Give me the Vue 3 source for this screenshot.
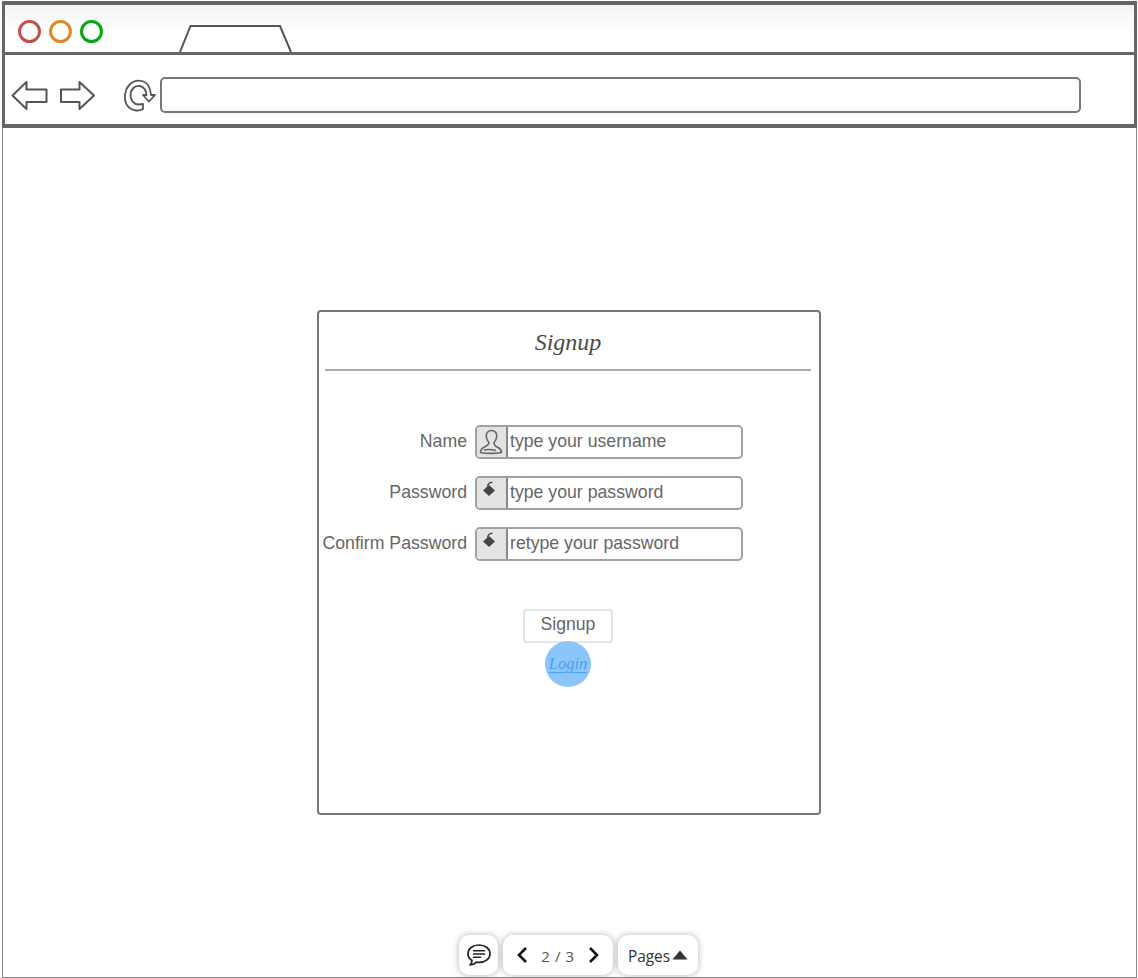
<script setup>
const fields = [
  { label: 'Name', placeholder: 'type your username', icon: 'user' },
  { label: 'Password', placeholder: 'type your password', icon: 'lock' },
  { label: 'Confirm Password', placeholder: 'retype your password', icon: 'lock' },
]
</script>

<template>
  <div class="page">
    <div class="window">
      <header class="chrome">
        <div class="tabbar">
          <span class="dot red"></span>
          <span class="dot orange"></span>
          <span class="dot green"></span>
          <svg class="tab" width="113" height="28" viewBox="0 0 113 28">
            <path d="M1 27 L11.500 1 L101 1 L112 27" fill="#fff" stroke="#555" stroke-width="2" />
          </svg>
        </div>
        <div class="toolbar">
          <svg class="nav-arrow" width="37" height="31" viewBox="0 0 37 31">
            <path d="M1.500 15.500 L15.500 2 V9.500 H35.500 V22 H15.500 V29 Z" fill="#fff" stroke="#555" stroke-width="2" stroke-linejoin="round" />
          </svg>
          <svg class="nav-arrow fwd" width="37" height="31" viewBox="0 0 37 31">
            <path d="M34 15.500 L19.500 2 V9.500 H1 V22 H19.500 V29 Z" fill="#fff" stroke="#555" stroke-width="2" stroke-linejoin="round" />
          </svg>
          <svg class="reload" width="34" height="35" viewBox="0 0 34 35">
            <path d="M20 31 C16 33.500 10 33 6 29.500 C1.500 25.500 0.500 18 3.500 11 C6.500 4.500 13 1.500 19 3 C25 4.500 27.500 10 28 17 H32 L26 23.500 L20 17 H23.500 C23 12 20.500 8.500 16.500 8 C11.500 7.500 7.500 11.500 7.500 17 C7.500 22.500 11 26.500 15.500 26.500 L20 26 Z" fill="#fff" stroke="#555" stroke-width="1.800" stroke-linejoin="round" />
          </svg>
          <div class="address"></div>
        </div>
      </header>

      <main class="content">
        <section class="card">
          <h1 class="title">Signup</h1>
          <hr class="rule" />
          <div class="form">
            <template v-for="f in fields" :key="f.label">
              <label class="label">{{ f.label }}</label>
              <div class="input">
                <span class="addon">
                  <svg v-if="f.icon === 'user'" class="user" width="24" height="26" viewBox="0 0 24 26">
                    <path d="M12.500 1.500 C9 1.500 7 4 7.300 7.500 C7.500 10 8.500 12 10 13.500 C10 15.500 8.500 16.500 5.500 18 C3 19.200 1.500 21 1.500 23.500 C7 24.500 16 24.500 22.500 23.500 C22.500 21 21 19.500 19 18.500 C16.500 17.500 15 15.500 15 13.500 C16.500 12 17.500 10 17.700 7.500 C18 4 16 1.500 12.500 1.500 Z" fill="none" stroke="#666" stroke-width="1.600" stroke-linejoin="round" />
                    <path d="M5 21 C9 20 13 20.500 17 21.500" fill="none" stroke="#666" stroke-width="1.400" />
                  </svg>
                  <svg v-else class="lock" width="18" height="20" viewBox="0 0 18 20">
                    <path d="M9 5 L15 10.500 L9 16 L3 10.500 Z" fill="#444" />
                    <path d="M7.500 6.500 C8 3.500 10 2 12.500 2.500" fill="none" stroke="#444" stroke-width="1.400" />
                  </svg>
                </span>
                <span class="placeholder">{{ f.placeholder }}</span>
              </div>
            </template>
          </div>
          <button class="submit" type="button">Signup</button>
          <a class="login">Login</a>
        </section>
      </main>

      <nav class="pager">
        <button class="pill comment" type="button" aria-label="Comments">
          <svg width="26" height="24" viewBox="0 0 26 24">
            <path d="M13 2 C6.500 2 2 5.800 2 10.700 C2 13.500 3.500 15.800 6 17.500 C6 19 5.500 20.800 4 22 C6.800 21.800 9 20.800 10.500 19.200 C11.300 19.300 12.100 19.400 13 19.400 C19.500 19.400 24 15.600 24 10.700 C24 5.800 19.500 2 13 2 Z" fill="none" stroke="#222" stroke-width="1.700" stroke-linejoin="round" />
            <path d="M7.500 7.800 H18.500 M7.500 11 H18.500 M7.500 14.200 H14.500" fill="none" stroke="#222" stroke-width="1.600" stroke-linecap="round" />
          </svg>
        </button>
        <div class="pill nav">
          <svg width="12" height="18" viewBox="0 0 12 18">
            <path d="M10 2 L3 9 L10 16" fill="none" stroke="#111" stroke-width="2.600" />
          </svg>
          <span class="count">2 / 3</span>
          <svg width="12" height="18" viewBox="0 0 12 18">
            <path d="M2 2 L9 9 L2 16" fill="none" stroke="#111" stroke-width="2.600" />
          </svg>
        </div>
        <button class="pill pages" type="button">
          <span class="pages-text">Pages</span>
          <svg width="16" height="10" viewBox="0 0 16 10">
            <path d="M8 0.500 L15.500 9.500 H0.500 Z" fill="#333" />
          </svg>
        </button>
      </nav>
    </div>
  </div>
</template>

<style>
html, body { margin: 0; background: #fff; }
</style>

<style scoped>
.page {
  width: 1138px;
  height: 978px;
  padding: 1px 1px 0 2px;
  box-sizing: border-box;
  background: #fff;
  font-family: "Liberation Sans", Arial, sans-serif;
}
.window {
  position: relative;
  height: 100%;
  box-sizing: border-box;
  border: 1px solid #888;
  border-width: 0 1px 1px 1px;
  display: flex;
  flex-direction: column;
}
.chrome {
  margin: 0 -1px;
  border: 3px solid #666;
  border-width: 4px 3px;
  height: 127px;
  box-sizing: border-box;
  flex: none;
  display: flex;
  flex-direction: column;
}
.tabbar {
  height: 50px;
  flex: none;
  box-sizing: border-box;
  border-bottom: 3px solid #666;
  background: linear-gradient(#f3f3f3, #fff 55%);
  display: flex;
  align-items: center;
  padding: 5px 0 0 13px;
  position: relative;
}
.dot {
  width: 23px;
  height: 23px;
  box-sizing: border-box;
  border-radius: 50%;
  border: 3px solid;
  margin-right: 8px;
  background: #fff;
}
.red { border-color: #c0504d; }
.orange { border-color: #e08a1e; }
.green { border-color: #00a816; }
.tab {
  position: absolute;
  left: 174px;
  bottom: -1px;
}
.toolbar {
  flex: 1;
  display: flex;
  align-items: center;
  padding: 11px 0 0 6px;
}
.nav-arrow { flex: none; }
.fwd { margin-left: 12px; }
.reload { margin-left: 26px; flex: none; }
.address {
  width: 921px;
  height: 36px;
  box-sizing: border-box;
  border: 2px solid #777;
  border-radius: 5px;
  margin-left: 3px;
  background: #fff;
}
.content {
  flex: 1;
  min-height: 0;
  padding-top: 182px;
  display: flex;
  justify-content: center;
}
.card {
  width: 504px;
  height: 505px;
  box-sizing: border-box;
  border: 2px solid #777;
  border-radius: 4px;
  display: flex;
  flex-direction: column;
  align-items: center;
  margin-left: -1px;
}
.title {
  margin: 0 2px 0 0;
  height: 57px;
  line-height: 60px;
  font-family: "Liberation Serif", serif;
  font-style: italic;
  font-weight: 400;
  font-size: 24px;
  color: #4a4a4a;
  flex: none;
}
.rule {
  align-self: stretch;
  margin: 0 8px 0 6px;
  border: 0;
  height: 2px;
  background: #aaa;
  flex: none;
}
.form {
  margin-top: 54px;
  align-self: flex-start;
  margin-left: 3px;
  display: grid;
  grid-template-columns: 145px 268px;
  column-gap: 8px;
  row-gap: 17px;
  align-items: center;
}
.label {
  text-align: right;
  font-size: 17.7px;
  color: #666;
  white-space: nowrap;
  padding-bottom: 1px;
}
.input {
  height: 34px;
  box-sizing: border-box;
  border: 2px solid #a0a0a0;
  border-radius: 5px;
  display: flex;
  align-items: center;
  overflow: hidden;
}
.addon {
  width: 31px;
  height: 100%;
  background: #e3e3e3;
  border-right: 2px solid #888;
  box-sizing: border-box;
  display: flex;
  align-items: center;
  justify-content: center;
  flex: none;
}
.user { margin-right: 2px; margin-top: -1px; }
.lock { margin-top: -7px; margin-right: 5px; }
.placeholder {
  margin-left: 2px;
  padding-bottom: 2px;
  font-size: 17.7px;
  color: #666;
  white-space: nowrap;
}
.submit {
  margin-top: 48px;
  margin-right: 2px;
  width: 90px;
  height: 34px;
  box-sizing: border-box;
  border: 2px solid #e4e4e4;
  border-radius: 4px;
  background: #fff;
  font-family: inherit;
  font-size: 17.6px;
  color: #666;
  padding: 0 0 3px;
  flex: none;
}
.login {
  margin-top: -2px;
  margin-right: 2px;
  width: 46px;
  height: 46px;
  border-radius: 50%;
  background: #8cc5fb;
  color: #4aa0ee;
  font-family: "Liberation Serif", serif;
  font-style: italic;
  font-size: 16.5px;
  text-align: center;
  line-height: 46px;
  text-decoration: underline;
  text-underline-offset: 3px;
  flex: none;
}
.pager {
  position: absolute;
  left: 456px;
  bottom: 2px;
  display: flex;
  gap: 5px;
  font-family: "Open Sans", sans-serif;
}
.pill {
  height: 40px;
  box-sizing: border-box;
  background: #fff;
  border: 0;
  border-radius: 10px;
  box-shadow: 0 0 7px rgba(0, 0, 0, 0.3);
  display: flex;
  align-items: center;
  justify-content: center;
  padding: 0;
  font-family: inherit;
  color: #333;
}
.comment { width: 39px; }
.nav { width: 110px; gap: 13px; }
.count { font-size: 15px; letter-spacing: 0.6px; color: #555; padding-top: 2px; }
.pages { width: 80px; font-size: 15.4px; font-weight: 500; gap: 2px; }
.pages-text { padding-top: 3px; }
</style>
